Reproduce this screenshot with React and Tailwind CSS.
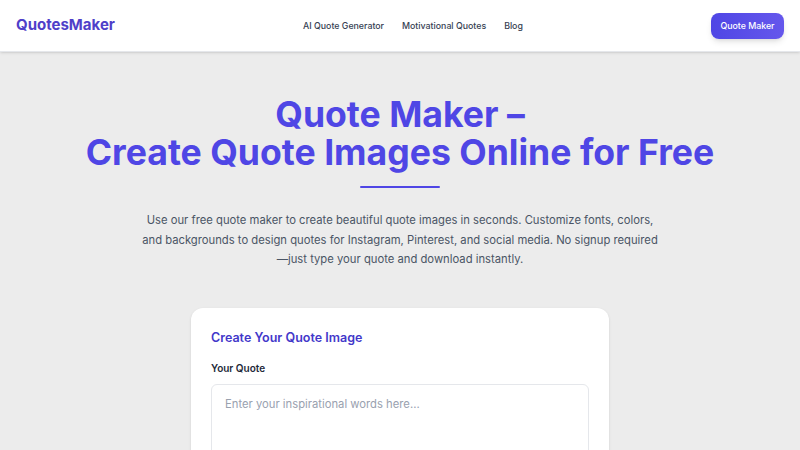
import React from 'react';

const navLinks = ["AI Quote Generator", "Motivational Quotes", "Blog"];

const Header = () => (
  <header className="h-[52px] bg-white border-b border-gray-200 shadow-sm flex items-center justify-between px-4">
    <a className="text-[15px] font-bold text-[#4f3fc9]">QuotesMaker</a>
    <nav className="flex items-center gap-[18px]">
      {navLinks.map((link) => (
        <a key={link} className="text-[8.8px] font-medium text-gray-700">{link}</a>
      ))}
    </nav>
    <button className="h-[26px] w-[73px] rounded-lg bg-gradient-to-r from-[#4f46e5] to-[#6557ec] text-white text-[8.8px] font-medium shadow-md">
      Quote Maker
    </button>
  </header>
);

const App = () => {
  return (
    <div className="min-h-screen bg-[#ececec]" style={{ fontFamily: 'Inter, "Noto Sans", sans-serif' }}>
      <Header />
      <main className="flex flex-col items-center pt-[44px]">
        <h1 className="text-[35.6px] leading-[38px] font-bold text-[#4f46e5] text-center">
          Quote Maker –<br />Create Quote Images Online for Free
        </h1>
        <div className="w-[80px] h-[2px] bg-[#4f46e5] mt-[14px] rounded-full" />
        <p className="mt-[23px] max-w-[516px] text-center text-[11.25px] leading-[19.5px] text-gray-600">
          Use our free quote maker to create beautiful quote images in seconds. Customize fonts, colors, and backgrounds to design quotes for Instagram, Pinterest, and social media. No signup required—just type your quote and download instantly.
        </p>
        <section className="mt-[38px] w-[418px] bg-white rounded-xl shadow-sm px-5 pt-[21px] pb-6">
          <h2 className="text-[12.5px] font-semibold text-[#4338ca]">Create Your Quote Image</h2>
          <label className="block mt-[14px] text-[10px] font-semibold text-gray-800">Your Quote</label>
          <textarea
            className="mt-[8px] w-full h-[100px] border border-gray-200 rounded-md px-[13px] py-[11px] text-[11.25px] text-gray-700 placeholder:text-gray-400 resize-none outline-none"
            placeholder="Enter your inspirational words here..."
          />
        </section>
      </main>
    </div>
  );
};

export default App;
